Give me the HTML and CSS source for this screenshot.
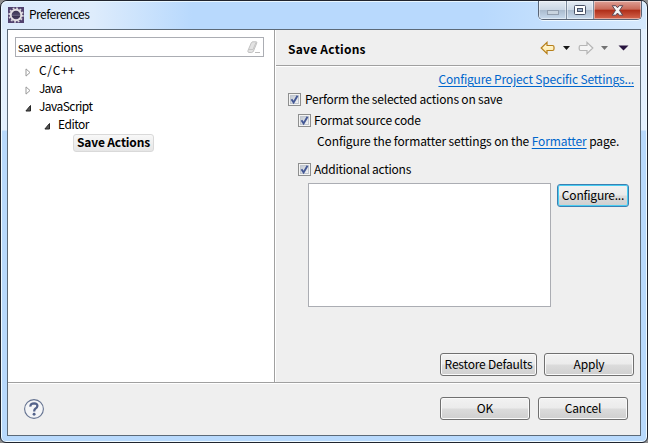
FILE: index.html
```html
<!DOCTYPE html>
<html lang="en">
<head>
<meta charset="utf-8">
<title>Preferences</title>
<link rel="stylesheet" href="styles.css">
</head>
<body>
<div class="window">
  <header class="titlebar">
    <svg class="app-icon" width="16" height="16" viewBox="0 0 16 16">
      <defs><linearGradient id="lens" x1="0" y1="0" x2="0" y2="1"><stop offset="0" stop-color="#38324c"/><stop offset=".45" stop-color="#4d4666"/><stop offset=".5" stop-color="#8a83a0"/><stop offset=".6" stop-color="#37304c"/><stop offset="1" stop-color="#564d70"/></linearGradient></defs>
      <rect width="16" height="16" fill="#51426f"/>
      <circle cx="8" cy="8" r="6.8" fill="none" stroke="#d8d5dc" stroke-width="1.8" stroke-dasharray="1.8 1.76"/>
      <circle cx="8" cy="8" r="5.3" fill="url(#lens)" stroke="#e4e1e4" stroke-width="1.9"/>
    </svg>
    <span class="caption">Preferences</span>
    <div class="controls">
      <span class="ctl min"><svg width="12" height="5"><rect x=".5" y=".5" width="11" height="4" fill="#c9d4df" stroke="#929eae"/></svg></span>
      <span class="ctl max"><svg width="12" height="10"><rect x=".5" y=".5" width="11" height="9" rx="1" fill="#fff" stroke="#485166"/><rect x="3.5" y="3.5" width="5" height="3" fill="#9fb2cb" stroke="#485166"/></svg></span>
      <span class="ctl close"><svg width="13" height="11" viewBox="0 0 13 11"><path d="M1.2 .7H4.8L6.5 2.8 8.2 .7H11.8L8.5 5.4 11.8 10.2H8.2L6.5 8 4.8 10.2H1.2L4.5 5.4Z" fill="#f5f5f5" stroke="#5b4653"/></svg></span>
    </div>
  </header>
  <div class="client">
    <div class="main">
      <aside class="nav">
        <div class="filter"><span class="t-filter">save actions</span>
          <svg width="14" height="13" viewBox="0 0 14 13"><path d="M1 9.500 4.300 1.800Q4.800.8 6 .8H9.200Q10.200.9 9.800 2L6.500 10Q6 11.300 4.700 11.500H1.800Q.5 11.300 1 9.500Z" fill="#e3e3e3" stroke="#c2c2c2"/><path d="M1.300 8.500H6L9 1.400" fill="none" stroke="#c6c6c6"/><path d="M8 11.500H13" stroke="#bdbdbd"/></svg>
        </div>
        <ul class="tree">
          <li class="lv1"><svg class="tw" width="7" height="9"><path d="M1 .9V8.1L5 4.5Z" fill="#fff" stroke="#999"/></svg><span class="t-c">C/C++</span></li>
          <li class="lv1"><svg class="tw" width="7" height="9"><path d="M1 .9V8.1L5 4.5Z" fill="#fff" stroke="#999"/></svg><span class="t-java">Java</span></li>
          <li class="lv1"><svg class="tw" width="7" height="9"><path d="M5.5 1.5V7H.9Z" fill="#555" stroke="#262626"/></svg><span class="t-js">JavaScript</span></li>
          <li class="lv2"><svg class="tw" width="7" height="9"><path d="M5.5 1.5V7H.9Z" fill="#555" stroke="#262626"/></svg><span class="t-ed">Editor</span></li>
          <li class="lv3"><b class="selected">Save Actions</b></li>
        </ul>
      </aside>
      <section class="page">
        <div class="page-head">
          <b class="page-title">Save Actions</b>
          <svg class="history" width="90" height="14" viewBox="0 0 90 14">
            <defs><linearGradient id="gold" x1="0" y1="0" x2="0" y2="1"><stop offset="0" stop-color="#fffbe5"/><stop offset="1" stop-color="#ffe69c"/></linearGradient></defs>
            <path d="M1.2 7 7 1.4V4.5H12.5Q14 4.5 14 6V8Q14 9.5 12.5 9.5H7V12.6Z" fill="url(#gold)" stroke="#b67f19" stroke-width="1.2"/>
            <path d="M23 5H30L26.5 9Z" fill="#161616"/>
            <path d="M52.8 7 47 1.4V4.5H40.5Q39.2 4.5 39.2 6V8Q39.2 9.5 40.5 9.5H47V12.6Z" fill="#f4f4f4" stroke="#b5b5b5" stroke-width="1.2"/>
            <path d="M61 5H68L64.500 9Z" fill="#727272"/>
            <path d="M78.500 4.500H88.500L83.500 9.500Z" fill="#28143f"/>
          </svg>
        </div>
        <div class="page-body">
          <a class="link project">Configure Project Specific Settings...</a>
          <label class="check c1"><svg class="box" width="13" height="13"><use href="#tick"/></svg><span class="t-perform">Perform the selected actions on save</span></label>
          <label class="check c2"><svg class="box" width="13" height="13"><use href="#tick"/></svg><span class="t-format">Format source code</span></label>
          <p class="hint">Configure the formatter settings on the <a class="link">Formatter</a> page.</p>
          <label class="check c3"><svg class="box" width="13" height="13"><use href="#tick"/></svg><span class="t-add">Additional actions</span></label>
          <div class="additional"><div class="list"></div><button class="btn focus"><span class="t-conf">Configure...</span></button></div>
          <div class="page-actions"><button class="btn restore"><span class="t-restore">Restore Defaults</span></button><button class="btn"><span class="t-apply">Apply</span></button></div>
        </div>
      </section>
    </div>
    <footer class="footer">
      <svg class="help" width="20" height="20" viewBox="0 0 20 20"><circle cx="10" cy="10" r="9.4" fill="#f4f5f7" stroke="#657391" stroke-width="1.1"/><path d="M6.400 7.600Q6.300 4.300 10.200 4.300 13.500 4.400 13.400 7 13.300 8.600 11.300 9.800 10.200 10.500 10.200 12.400" fill="none" stroke="#53628a" stroke-width="2.300"/><circle cx="10.100" cy="15.300" r="1.450" fill="#53628a"/></svg>
      <button class="btn"><span class="t-ok">OK</span></button><button class="btn"><span class="t-cancel">Cancel</span></button>
    </footer>
  </div>
</div>
<svg class="symbols" width="0" height="0"><defs>
  <linearGradient id="well" x1="0" y1="0" x2="1" y2="1"><stop offset="0" stop-color="#bfc6cf"/><stop offset="1" stop-color="#f6f6f6"/></linearGradient>
  <g id="tick"><rect x=".5" y=".5" width="12" height="12" fill="#f4f4f4" stroke="#8e8f8f"/><rect x="2.500" y="2.500" width="8" height="8" fill="url(#well)" stroke="#c0c6cf"/><path d="M3.500 6.300 5.600 9.500 9.500 2.800" fill="none" stroke="#435795" stroke-width="1.900"/></g>
</defs></svg>
</body>
</html>
```
FILE: styles.css
```css
* { box-sizing: border-box; }
body { margin: 0; background: #8e8e8e; overflow: hidden; font: 12px/18px "Noto Sans CJK KR", "Noto Sans", sans-serif; color: #000; }
span, b, p { white-space: nowrap; }
.symbols { position: absolute; }
.window { width: 648px; height: 443px; padding: 0 6px 6px; border: 1px solid #20242e; border-radius: 7px 7px 6px 6px; box-shadow: inset 0 0 0 1px #effaff; background: linear-gradient(#e2effd 0, #e4f0fd 129px, #b8d9fc 130px, #b8d9fc 100%); }
.titlebar { height: 28px; display: flex; align-items: flex-start; margin: 0 -5px; padding-left: 6px; background: linear-gradient(90deg, #dbeafb 0, #deecfc 90px, #b8d9fd 190px, #b8d9fd 480px, #d5e9fd 640px); box-shadow: inset 0 1px #e8f6ff; border-radius: 6px 6px 0 0; }
.app-icon { margin-top: 6px; margin-right: 5px; }
.caption { margin-top: 4px; letter-spacing: -.5px; }
.controls { display: flex; margin-left: auto; margin-right: 4px; height: 19px; width: 104px; border: 1px solid #596475; border-top: 0; border-radius: 0 0 5px 5px; overflow: hidden; box-shadow: 0 1px #eef8ff; }
.ctl { display: flex; align-items: center; justify-content: center; border-right: 1px solid #7d8b9d; background: linear-gradient(#e4ebf3, #cbd7e5 48%, #a9bacd 50%, #c8daed); box-shadow: inset 0 0 0 1px #ffffff70; }
.ctl.min { width: 28px; padding-top: 5px; }
.ctl.max { width: 27px; }
.ctl.close { flex: 1; border: 0; background: linear-gradient(#dfa096, #c96a59 46%, #ae2c17 50%, #d5664e); }
.client { height: 407px; border: 1px solid #5c6a78; background: #efefef; }
.main { height: 353px; display: flex; border-bottom: 1px solid #a0a0a0; }
.nav { width: 267px; background: #fff; border-right: 1px solid #a0a0a0; padding: 7px 10px 0 7px; }
.filter { height: 20px; border: 1px solid #abadb3; display: flex; align-items: center; justify-content: space-between; padding: 0 2px; }
.t-filter { letter-spacing: -.33px; }
.tree { list-style: none; margin: 5px 0 0; padding: 0; }
.tree li { height: 18px; display: flex; align-items: center; }
.tree li > span { position: relative; top: -1px; }
.tw { margin-right: 7px; margin-top: 2px; flex: none; }
.t-c { letter-spacing: .7px; }
.t-java { letter-spacing: -.8px; }
.t-js { letter-spacing: -.55px; }
.t-ed { letter-spacing: -.5px; }
.lv1 { padding-left: 10px; }
.lv2 { padding-left: 29px; }
.lv3 { padding-left: 58px; }
.selected { height: 18px; line-height: 14px; width: 81px; text-align: center; letter-spacing: -.15px; border: 1px solid #d9d9d9; border-radius: 3px; background: linear-gradient(#f8f8f8, #e6e6e6); }
.page { flex: 1; display: flex; flex-direction: column; border-left: 1px solid #fff; }
.page-head { height: 36px; display: flex; align-items: center; padding: 2px 12px 0 12px; border-bottom: 1px solid #a0a0a0; box-shadow: 0 1px #fff; }
.page-title { letter-spacing: .25px; }
.history { margin-left: auto; margin-right: -2px; margin-top: -1px; }
.page-body { flex: 1; display: flex; flex-direction: column; align-items: flex-start; padding: 4px 6px 6px 12px; }
.link { color: #0066cc; text-decoration: underline; text-decoration-thickness: 1px; text-underline-offset: 2px; }
.project { align-self: flex-end; white-space: nowrap; letter-spacing: -.17px; }
.check { display: flex; align-items: center; height: 18px; letter-spacing: -.2px; }
.box { margin-right: 4px; flex: none; }
.c1 { margin-top: 2px; }
.c2 { margin: 3px 0 0 10px; }
.c2 .box, .c3 .box { margin-right: 3px; }
.hint { margin: 3px 0 0 29px; letter-spacing: -.12px; }
.c3 { margin: 10px 0 0 10px; letter-spacing: -.25px; }
.additional { display: flex; align-items: flex-start; margin: 5px 0 0 20px; gap: 6px; }
.list { width: 243px; height: 124px; border: 1px solid #abadb3; background: #fff; }
.btn { width: 90px; height: 23px; padding: 0 0 1px; display: flex; align-items: center; justify-content: center; font: inherit; letter-spacing: -.2px; color: inherit; border: 1px solid #707070; border-radius: 3px; background: linear-gradient(#f2f2f2, #ebebeb 49%, #dcdcdc 51%, #cfcfcf); box-shadow: inset 0 0 0 1px #fafafa; }
.focus { width: 72px; border-color: #3c7fb1; box-shadow: inset 0 0 0 1px #48cdf2; margin-top: 1px; }
.restore { width: 97px; }
.page-actions { margin-top: auto; align-self: flex-end; display: flex; gap: 7px; }
.footer { height: 52px; display: flex; align-items: center; padding: 0 12px 1px 16px; gap: 8px; box-shadow: inset 0 1px #fff; }
.help { margin-right: auto; }
```
